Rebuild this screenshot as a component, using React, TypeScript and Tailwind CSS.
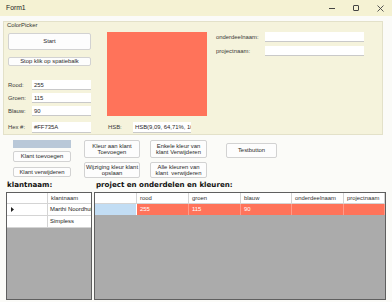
import { ReactNode } from 'react';

const txt = "font-['Liberation_Sans',Arial,sans-serif] text-[5.9px]";

function TextBox({ value = '', className = '' }: { value?: string; className?: string }) {
  return (
    <div
      className={`bg-white border-b border-[#c9c9c9] pl-[2px] overflow-hidden whitespace-nowrap leading-[10px] text-[#2a2a2a] ${className}`}
    >
      {value}
    </div>
  );
}

function Btn({ children, className = '' }: { children: ReactNode; className?: string }) {
  return (
    <div
      className={`bg-[#fdfdfd] border border-[#d2d2d2] rounded-[2px] flex items-center justify-center text-center whitespace-nowrap leading-[6.5px] text-[#2a2a2a] ${className}`}
    >
      {children}
    </div>
  );
}

function Field({ label, value, labelW, boxW, h = 'h-[10px]' }: { label: string; value?: string; labelW: string; boxW: string; h?: string }) {
  return (
    <div className="flex items-center">
      <span className={`${labelW} text-[#3a3a3a] whitespace-nowrap`}>{label}</span>
      <TextBox value={value} className={`${boxW} ${h}`} />
    </div>
  );
}

const rightCols = [
  { name: 'rood', w: 'w-[52px]', val: '255' },
  { name: 'groen', w: 'w-[52px]', val: '115' },
  { name: 'blauw', w: 'w-[51px]', val: '90' },
  { name: 'onderdeelnaam', w: 'w-[52px]', val: '' },
  { name: 'projectnaam', w: 'flex-1', val: '' },
];

export default function App() {
  return (
    <div className={`w-[392px] h-[302px] bg-[#fbfbf8] overflow-hidden flex flex-col ${txt}`}>
      {/* title bar */}
      <div className="h-[16px] shrink-0 bg-[#f5f2d3] flex items-center">
        <span className="pl-[6px] text-[6.8px] text-[#222]">Form1</span>
        <div className="ml-auto flex">
          <div className="w-[24px] h-[16px] flex items-center justify-center">
            <div className="w-[6px] h-px bg-[#444]" />
          </div>
          <div className="w-[24px] h-[16px] flex items-center justify-center">
            <div className="w-[6px] h-[6px] border border-[#444] rounded-[1px]" />
          </div>
          <div className="w-[24px] h-[16px] flex items-center justify-center">
            <svg width="7" height="7" viewBox="0 0 7 7">
              <path d="M0.5 0.5 L6.5 6.5 M6.5 0.5 L0.5 6.5" stroke="#444" strokeWidth="0.9" />
            </svg>
          </div>
        </div>
      </div>

      {/* ColorPicker group */}
      <div className="mt-[5px] ml-[3px] w-[380px] h-[114px] shrink-0 bg-[#f5f3dc] border border-[#e3e1c9] flex flex-col">
        <div className="h-[6px] pl-[3px] leading-[6px] text-[#333]">ColorPicker</div>
        <div className="flex">
          <div className="ml-[4px] w-[83px] flex flex-col">
            <Btn className="mt-[5px] h-[17px]">Start</Btn>
            <Btn className="mt-[7px] h-[9px]">Stop klik op spatiebalk</Btn>
            <div className="mt-[14px]">
              <Field label="Rood:" value="255" labelW="w-[24px]" boxW="w-[59px]" />
            </div>
            <div className="mt-[3px]">
              <Field label="Groen:" value="115" labelW="w-[24px]" boxW="w-[59px]" />
            </div>
            <div className="mt-[3px]">
              <Field label="Blauw:" value="90" labelW="w-[24px]" boxW="w-[59px]" />
            </div>
            <div className="mt-[6px]">
              <Field label="Hex #:" value="#FF735A" labelW="w-[24px]" boxW="w-[59px]" h="h-[11px]" />
            </div>
          </div>
          <div className="ml-[16px] w-[100px] flex flex-col">
            <div className="mt-[4px] h-[84px] bg-[#ff735a]" />
            <div className="mt-[6px] pl-[1px]">
              <Field label="HSB:" value="HSB(9,09, 64,71%, 100%)" labelW="w-[25px]" boxW="w-[58px]" h="h-[11px]" />
            </div>
          </div>
          <div className="ml-[9px] w-[148px] flex flex-col">
            <div className="mt-[4px]">
              <Field label="onderdeelnaam:" labelW="w-[49px]" boxW="w-[99px]" />
            </div>
            <div className="mt-[4px]">
              <Field label="projectnaam:" labelW="w-[49px]" boxW="w-[99px]" />
            </div>
          </div>
        </div>
      </div>

      {/* buttons */}
      <div className="flex shrink-0 h-[43px]">
        <div className="ml-[13px] w-[58px] flex flex-col">
          <div className="mt-[5px] h-[8px] bg-[#b9c8d8]" />
          <Btn className="mt-[3px] h-[11px]">Klant toevoegen</Btn>
          <Btn className="mt-[5px] h-[10px]">Klant verwijderen</Btn>
        </div>
        <div className="ml-[13px] w-[56px] flex flex-col">
          <Btn className="mt-[5px] h-[18px]">Kleur aan klant<br />Toevoegen</Btn>
          <Btn className="mt-[4px] h-[16px]">Wijziging kleur klant<br />opslaan</Btn>
        </div>
        <div className="ml-[10px] w-[57px] flex flex-col">
          <Btn className="mt-[5px] h-[18px]">Enkele kleur van<br />klant Verwijderen</Btn>
          <Btn className="mt-[4px] h-[16px]">Alle kleuren van<br />klant&nbsp; verwijderen</Btn>
        </div>
        <div className="ml-[19px] w-[51px] flex flex-col">
          <Btn className="mt-[8px] h-[15px]">Testbutton</Btn>
        </div>
      </div>

      {/* headings */}
      <div className="h-[14px] shrink-0 flex items-center font-['DejaVu_Sans',Verdana,sans-serif] font-bold text-[7.1px] text-[#111]">
        <span className="pl-[7px] w-[96px]">klantnaam:</span>
        <span>project en onderdelen en kleuren:</span>
      </div>

      {/* grids */}
      <div className="flex pl-[6px] h-[108px] shrink-0">
        <div className="w-[86px] h-full border border-[#5f5f5f] bg-[#ababab] flex flex-col">
          <div className="flex h-[11px] bg-white border-b border-[#d4d4d4]">
            <div className="w-[41px] border-r border-[#d4d4d4]" />
            <div className="flex-1 pl-[3px] leading-[10px] text-[#333]">klantnaam</div>
          </div>
          <div className="flex h-[12px] bg-white border-b border-[#d4d4d4]">
            <div className="w-[41px] border-r border-[#d4d4d4] flex items-center pl-[4px]">
              <svg width="3" height="5" viewBox="0 0 3 5">
                <path d="M0 0 L3 2.5 L0 5 Z" fill="#222" />
              </svg>
            </div>
            <div className="flex-1 pl-[2px] leading-[11px] text-[#222] whitespace-nowrap overflow-hidden">Marthi Noordhuis</div>
          </div>
          <div className="flex h-[12px] bg-white border-b border-[#d4d4d4]">
            <div className="w-[41px] border-r border-[#d4d4d4]" />
            <div className="flex-1 pl-[2px] leading-[11px] text-[#222]">Simpless</div>
          </div>
        </div>

        <div className="ml-[2px] w-[292px] h-full border border-[#5f5f5f] bg-[#ababab] flex flex-col">
          <div className="flex h-[11px] bg-white border-b border-[#d4d4d4]">
            <div className="w-[42px] border-r border-[#d4d4d4]" />
            {rightCols.map((c) => (
              <div key={c.name} className={`${c.w} border-r border-[#d4d4d4] pl-[3px] leading-[10px] text-[#333] overflow-hidden whitespace-nowrap`}>
                {c.name}
              </div>
            ))}
          </div>
          <div className="flex h-[11px]">
            <div className="w-[42px] bg-[#c2ddf4] border-r border-white" />
            {rightCols.map((c) => (
              <div key={c.name} className={`${c.w} bg-[#ff735a] border-r border-[#ff9b8a] pl-[3px] leading-[11px] text-white`}>
                {c.val}
              </div>
            ))}
          </div>
        </div>
      </div>
    </div>
  );
}
